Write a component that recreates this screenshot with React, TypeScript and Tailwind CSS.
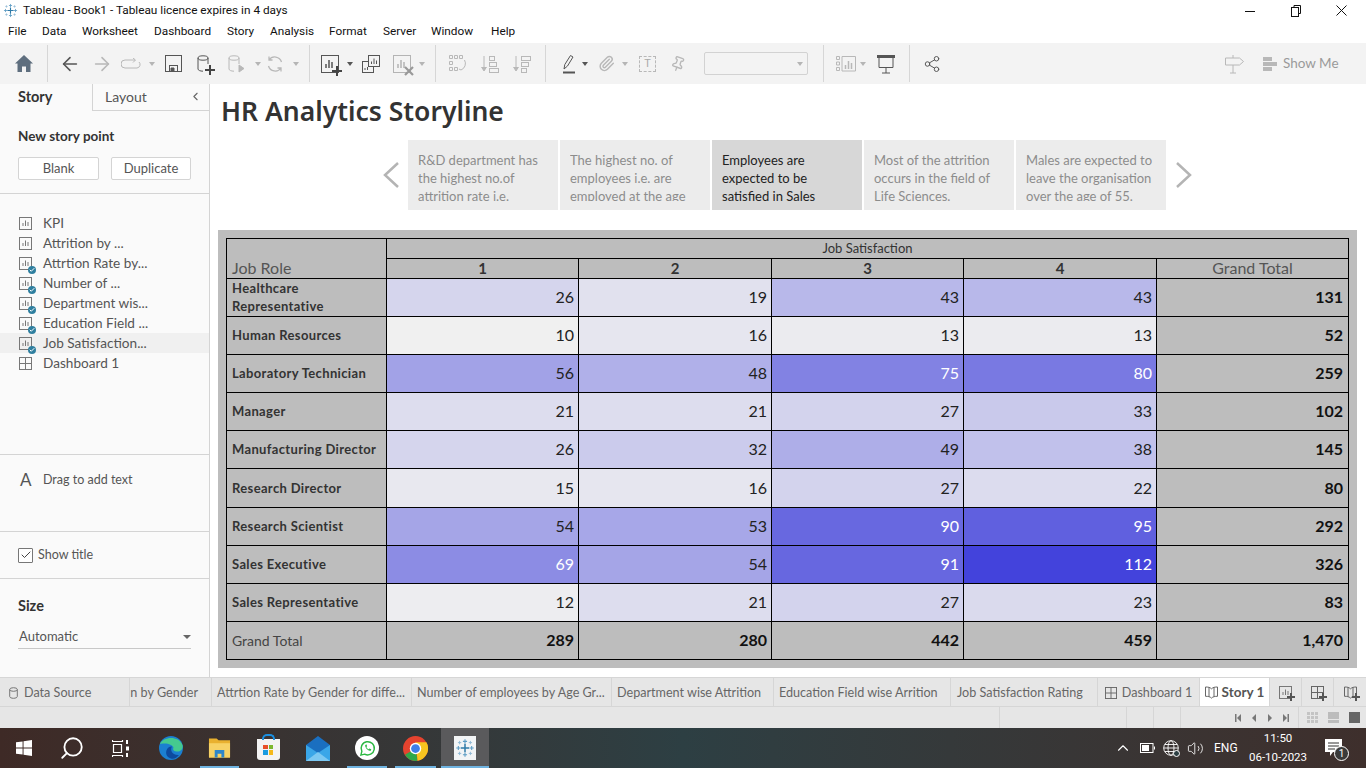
import React from 'react';
import { ArrowLeft, ArrowRight, Share2, Paperclip, Pin, Search, ChevronUp, Volume2, Check, ChevronLeft } from 'lucide-react';

const ui = "font-['Roboto',sans-serif]";
const tb = "font-['Lato',sans-serif]";

const menuItems = [
  ['File', 'w-[34px]'], ['Data', 'w-[40px]'], ['Worksheet', 'w-[72px]'], ['Dashboard', 'w-[73px]'], ['Story', 'w-[43px]'], ['Analysis', 'w-[59px]'],
  ['Format', 'w-[54px]'], ['Server', 'w-[48px]'], ['Window', 'w-[60px]'], ['Help', 'w-[40px]'],
];

const rows: [string, number, number, number, number, string][] = [
  ['Healthcare Representative', 26, 19, 43, 43, '131'],
  ['Human Resources', 10, 16, 13, 13, '52'],
  ['Laboratory Technician', 56, 48, 75, 80, '259'],
  ['Manager', 21, 21, 27, 33, '102'],
  ['Manufacturing Director', 26, 32, 49, 38, '145'],
  ['Research Director', 15, 16, 27, 22, '80'],
  ['Research Scientist', 54, 53, 90, 95, '292'],
  ['Sales Executive', 69, 54, 91, 112, '326'],
  ['Sales Representative', 12, 21, 27, 23, '83'],
];

const sheets = ['KPI', 'Attrition by ...', 'Attrtion Rate by...', 'Number of ...', 'Department wis...', 'Education Field ...', 'Job Satisfaction...'];

const storyPoints = [
  ['R&D department has', 'the highest no.of', 'attrition rate i.e.'],
  ['The highest no. of', 'employees i.e. are', 'employed at the age'],
  ['Employees are', 'expected to be', 'satisfied in Sales'],
  ['Most of the attrition', 'occurs in the field of', 'Life Sciences.'],
  ['Males are expected to', 'leave the organisation', 'over the age of 55.'],
];

const tabs = [
  ['n by Gender', 'w-[82px] justify-end pr-[13px]'],
  ['Attrtion Rate by Gender for diffe...', 'w-[200px] pl-[5px]'],
  ['Number of employees by Age Gr...', 'w-[200px] pl-[5px]'],
  ['Department wise Attrition', 'w-[162px] pl-[5px]'],
  ['Education Field wise Arrition', 'w-[177px] pl-[5px]'],
  ['Job Satisfaction Rating', 'w-[147px] pl-[6px]'],
];

function cellColor(v: number) {
  const t = (v - 10) / 102;
  const rg = Math.round(240 - t * 173);
  const b = Math.round(240 - t * 20);
  return `rgb(${rg},${rg},${b})`;
}

function Caret({ light = false }: { light?: boolean }) {
  return <span className={`block h-0 w-0 border-x-[3px] border-t-[4px] border-x-transparent ${light ? 'border-t-[#b5b5b5]' : 'border-t-[#555]'}`} />;
}

function Sep({ className = '' }: { className?: string }) {
  return <div className={`h-[37px] w-px bg-[#d6d6d6] ${className}`} />;
}

function ChartIcon({ dim = false, size = 18 }: { dim?: boolean; size?: number }) {
  const c = dim ? '#b4b4b4' : '#555';
  return (
    <svg width={size} height={size} viewBox="0 0 18 18" fill="none" stroke={c}>
      <rect x="0.5" y="0.5" width="17" height="17" />
      <path d="M5 13V9M8 13V5M11 13V7" strokeWidth="1.5" />
    </svg>
  );
}

function Plus({ className = '' }: { className?: string }) {
  return (
    <svg className={className} width="10" height="10" viewBox="0 0 10 10">
      <path d="M4 0h2v4h4v2H6v4H4V6H0V4h4z" fill="#444" />
    </svg>
  );
}

function SheetIcon({ checked }: { checked: boolean }) {
  return (
    <div className="relative h-[13px] w-[13px]">
      <svg width="13" height="13" viewBox="0 0 13 13" fill="none" stroke="#777">
        <rect x="0.5" y="0.5" width="12" height="12" />
        <path d="M4 9V6M6.5 9V3.5M9 9V5" />
      </svg>
      {checked && (
        <span className="absolute -right-[4px] -bottom-[4px] flex h-[8px] w-[8px] items-center justify-center rounded-full bg-[#2f7f9f]">
          <Check size={6} color="#fff" strokeWidth={4} />
        </span>
      )}
    </div>
  );
}

function GridIcon({ color = '#777', size = 13 }: { color?: string; size?: number }) {
  return (
    <svg width={size} height={size} viewBox="0 0 13 13" fill="none" stroke={color}>
      <rect x="0.5" y="0.5" width="12" height="12" />
      <path d="M6.5 0.5V12.5M0.5 6.5H12.5" />
    </svg>
  );
}

function BookIcon({ color = '#666' }: { color?: string }) {
  return (
    <svg width="13" height="13" viewBox="0 0 13 13" fill="none" stroke={color}>
      <path d="M.5 1c2.500 0 4.500.3 6 1.800C8 1.300 10 1 12.500 1v9.300c-2.500 0-4.500.3-6 1.800-1.500-1.500-3.500-1.800-6-1.800zM4 1.300v9.400M9 1.300v9.400" />
    </svg>
  );
}

function TableauMark({ size = 16 }: { size?: number }) {
  return (
    <svg width={size} height={size} viewBox="0 0 24 24" fill="none" strokeLinecap="butt">
      <path d="M12 7v10M7 12h10" stroke="#2f7aa8" strokeWidth="1.8" />
      <path d="M12 1.500v5M9.500 4h5M12 17.500v5M9.500 20h5M1.500 12h5M4 9.500v5M17.500 12h5M20 9.500v5" stroke="#5b9bc4" strokeWidth="1.300" />
      <path d="M5.500 3.500v4M3.500 5.500h4M18.500 3.500v4M16.500 5.500h4M5.500 16.500v4M3.500 18.500h4M18.500 16.500v4M16.500 18.500h4" stroke="#8db8d4" strokeWidth="1.100" />
    </svg>
  );
}

function Toolbar() {
  return (
    <div className="flex h-[41px] items-center bg-[#f3f3f3] pl-[8px]">
      <div className="flex w-[32px] justify-center">
        <svg width="18" height="17" viewBox="0 0 18 17" fill="#5e6e7e"><path d="M9 0L0 8.500h2.500V17h4.500v-5.500h4V17h4.500V8.500H18z" /></svg>
      </div>
      <Sep className="ml-[7px]" />
      <div className="ml-[6px] flex w-[32px] justify-center"><ArrowLeft size={22} color="#555" strokeWidth={1.700} /></div>
      <div className="flex w-[32px] justify-center"><ArrowRight size={22} color="#b8b8b8" strokeWidth={1.700} /></div>
      <div className="flex w-[26px] justify-center">
        <svg width="20" height="12" viewBox="0 0 20 12" fill="none" stroke="#b8b8b8"><path d="M14 2H4a3.500 3.500 0 0 0 0 8h12a3.500 3.500 0 0 0 2-6M12 0l2.500 2L12 4.500" /></svg>
      </div>
      <div className="flex w-[14px] justify-center pl-[2px]"><Caret light /></div>
      <div className="flex w-[30px] justify-center">
        <svg width="17" height="17" viewBox="0 0 17 17" fill="none" stroke="#555"><rect x="0.500" y="0.500" width="16" height="16" /><rect x="4.500" y="10.500" width="8" height="6" /><path d="M6 13h3v3H6z" fill="#555" /></svg>
      </div>
      <div className="relative flex w-[32px] justify-center">
        <svg width="15" height="18" viewBox="0 0 15 18" fill="none" stroke="#555"><ellipse cx="6" cy="3" rx="5" ry="2.200" /><path d="M1 3v11c0 1.200 2.200 2.200 5 2.200M11 3v6" /></svg>
        <Plus className="absolute right-[5px] -bottom-[2px]" />
      </div>
      <div className="flex w-[32px] justify-center">
        <svg width="17" height="18" viewBox="0 0 17 18" fill="none" stroke="#b8b8b8"><ellipse cx="6" cy="3" rx="5" ry="2.200" /><path d="M1 3v11c0 1.200 2.200 2.200 5 2.200M11 3v6" /><path d="M11 10l5 3.500-5 3.500z" fill="#b8b8b8" /></svg>
      </div>
      <div className="flex w-[8px] justify-center pl-[3px]"><Caret light /></div>
      <div className="ml-[1px] flex w-[28px] justify-center">
        <svg width="18" height="18" viewBox="0 0 18 18" fill="none" stroke="#b8b8b8" strokeWidth="1.300"><path d="M15.500 7A7 7 0 0 0 3 5M2.500 11A7 7 0 0 0 15 13M3 1.500V5h3.500M15 16.500V13h-3.500" /></svg>
      </div>
      <div className="flex w-[14px] justify-center"><Caret light /></div>
      <Sep className="ml-[6px]" />
      <div className="relative ml-[11px] flex w-[18px] justify-center">
        <ChartIcon />
        <Plus className="absolute -right-[3px] -bottom-[3px]" />
      </div>
      <div className="ml-[7px] flex w-[8px] justify-center"><Caret /></div>
      <div className="ml-[8px] flex w-[18px] justify-center">
        <svg width="18" height="18" viewBox="0 0 18 18" fill="none" stroke="#555"><rect x="0.500" y="6.500" width="11" height="11" /><rect x="6.500" y="0.500" width="11" height="11" fill="#f3f3f3" /><path d="M9.500 9V6.500M12 9V3.500M14.500 9V5.500M3 15v-2M5.500 15v-3" /></svg>
      </div>
      <div className="relative ml-[13px] flex w-[18px] justify-center">
        <ChartIcon dim />
        <svg className="absolute -right-[3px] -bottom-[3px]" width="10" height="10" viewBox="0 0 10 10" fill="none" stroke="#999" strokeWidth="2.200"><path d="M1 1l8 8M9 1l-8 8" /></svg>
      </div>
      <div className="ml-[7px] flex w-[8px] justify-center"><Caret light /></div>
      <Sep className="ml-[9px]" />
      <div className="ml-[13px] flex w-[18px] justify-center">
        <svg width="18" height="18" viewBox="0 0 18 18" fill="none" stroke="#b8b8b8"><path d="M.5.5h3v3h-3zM5.500.5h3v3h-3zM10.500.5h3v3h-3zM.5 6.500h3v3h-3zM.5 12.500h3v3h-3zM5.500 12.500h3v3h-3zM15.500 5a7 7 0 0 1-3.500 10l-2-1" /></svg>
      </div>
      <div className="ml-[14px] flex w-[18px] justify-center">
        <svg width="18" height="18" viewBox="0 0 18 18" fill="none" stroke="#b8b8b8"><path d="M3 1v13M.500 12L3 16l2.500-4" fill="#b8b8b8" /><rect x="8.500" y="1.500" width="5" height="4" /><rect x="8.500" y="7.500" width="7" height="4" /><rect x="8.500" y="13.500" width="9" height="4" /></svg>
      </div>
      <div className="ml-[14px] flex w-[18px] justify-center">
        <svg width="18" height="18" viewBox="0 0 18 18" fill="none" stroke="#b8b8b8"><path d="M3 1v13M.500 12L3 16l2.500-4" fill="#b8b8b8" /><rect x="8.500" y="1.500" width="9" height="4" /><rect x="8.500" y="7.500" width="7" height="4" /><rect x="8.500" y="13.500" width="5" height="4" /></svg>
      </div>
      <Sep className="ml-[14px]" />
      <div className="ml-[16px] flex w-[14px] justify-center">
        <svg width="14" height="20" viewBox="0 0 14 20" fill="none"><path d="M2 15l.8-4.500L8.500 1.500l2.500 1.500L5.500 12z" stroke="#555" /><path d="M1 18.500h12" stroke="#555" strokeWidth="2" /></svg>
      </div>
      <div className="ml-[5px] flex w-[8px] justify-center"><Caret /></div>
      <div className="ml-[10px] flex w-[14px] justify-center"><Paperclip size={17} color="#b8b8b8" className="shrink-0" /></div>
      <div className="ml-[8px] flex w-[8px] justify-center"><Caret light /></div>
      <div className="ml-[10px] flex w-[17px] justify-center">
        <div className={`flex h-[16px] w-[17px] items-center justify-center border border-dashed border-[#b8b8b8] text-[11px] leading-none text-[#aaa] ${ui}`}>T</div>
      </div>
      <div className="ml-[15px] flex w-[14px] justify-center"><Pin size={16} color="#b8b8b8" className="shrink-0 rotate-[20deg]" /></div>
      <div className="ml-[19px] flex h-[23px] w-[104px] items-center justify-end rounded-[2px] border border-[#d2d2d2] pr-[4px]"><Caret light /></div>
      <Sep className="ml-[15px]" />
      <div className="ml-[12px] flex w-[20px] justify-center">
        <svg width="20" height="16" viewBox="0 0 20 16" fill="none" stroke="#b8b8b8"><path d="M.5.5h3v3h-3zM.5 6h3v3h-3zM.5 11.500h3v3h-3zM6 .5h13.500v14.500H6z" /><path d="M9.500 13V9M12.500 13V5M15.500 13V7" strokeWidth="1.500" /></svg>
      </div>
      <div className="ml-[3px] flex w-[8px] justify-center"><Caret light /></div>
      <div className="ml-[10px] flex w-[18px] justify-center">
        <svg width="18" height="20" viewBox="0 0 18 20" fill="none" stroke="#555"><path d="M0 1h18v3H0z" fill="#555" stroke="none" /><path d="M2 4v9.500h14V4M9 13.500V19M5 19h8" /></svg>
      </div>
      <Sep className="ml-[14px]" />
      <div className="ml-[15px] flex w-[14px] justify-center"><Share2 size={18} color="#555" strokeWidth={1.300} className="shrink-0" /></div>
      <div className="ml-auto flex items-center pr-[29px]">
        <svg width="19" height="20" viewBox="0 0 19 20" fill="none" stroke="#b8b8b8"><path d="M.5 4h14l4 3.500-4 3.500H.5zM8 1v3M8 11v8M5 19h6" /></svg>
        <div className="ml-[19px] flex w-[14px] flex-col gap-[1px]">
          <span className="h-[4px] w-[9px] bg-[#b8b8b8]" />
          <span className="h-[4px] w-[14px] bg-[#b8b8b8]" />
          <span className="h-[4px] w-[9px] bg-[#b8b8b8]" />
        </div>
        <span className={`ml-[6px] w-[54px] whitespace-nowrap text-[13.500px] text-[#9a9a9a] ${tb}`}>Show Me</span>
      </div>
    </div>
  );
}

function Sidebar() {
  return (
    <aside className={`flex w-[210px] shrink-0 flex-col border-r border-[#d4d4d4] bg-[#fafafa] text-[#555] ${tb}`}>
      <div className="flex h-[27px] text-[14px]">
        <div className="flex w-[92px] items-center pb-[2px] pl-[18px] text-[14.500px] font-bold text-[#333]">Story</div>
        <div className="flex flex-1 items-center justify-between border-b border-l border-[#d4d4d4] pr-[7px] pb-[1px] pl-[12px]">
          Layout
          <ChevronLeft size={13} color="#666" />
        </div>
      </div>
      <div className="flex h-[83px] flex-col border-b border-[#d4d4d4] px-[18px] pt-[16px]">
        <div className="text-[13.500px] leading-[18px] font-bold text-[#333]">New story point</div>
        <div className="mt-[12px] flex justify-between text-[13px]">
          <div className="flex h-[23px] w-[81px] items-center justify-center rounded-[2px] border border-[#d4d4d4] bg-white">Blank</div>
          <div className="flex h-[23px] w-[80px] items-center justify-center rounded-[2px] border border-[#d4d4d4] bg-white">Duplicate</div>
        </div>
      </div>
      <div className="flex h-[261px] flex-col border-b border-[#d4d4d4] pt-[19px] text-[13.600px]">
        {sheets.map((s, i) => (
          <div key={s} className={`flex h-[20px] items-center gap-[11px] pl-[19px] ${i === 6 ? 'bg-[#f0f0f0]' : ''}`}>
            <SheetIcon checked={i > 1} />
            {s}
          </div>
        ))}
        <div className="flex h-[20px] items-center gap-[11px] pl-[19px]">
          <GridIcon />
          Dashboard 1
        </div>
      </div>
      <div className="flex h-[77px] items-start border-b border-[#d4d4d4] pt-[15px] pl-[20px] text-[12.500px]">
        <span className="w-[23px] text-[17px] leading-[20px]">A</span>
        <span className="leading-[20px]">Drag to add text</span>
      </div>
      <div className="flex h-[47px] items-center gap-[5px] border-b border-[#d4d4d4] pl-[18px] text-[12.500px]">
        <span className="flex h-[15px] w-[15px] items-center justify-center rounded-[1px] border border-[#777] bg-white"><Check size={12} color="#444" strokeWidth={2} /></span>
        Show title
      </div>
      <div className="px-[18px] pt-[18px]">
        <div className="text-[14.500px] leading-[18px] font-bold text-[#333]">Size</div>
        <div className="mt-[11px] flex h-[23px] items-center justify-between border-b border-[#c8c8c8] pr-[0px] pl-[1px] text-[13px]">
          Automatic
          <span className="block h-0 w-0 border-x-[4px] border-t-[4px] border-x-transparent border-t-[#666]" />
        </div>
      </div>
    </aside>
  );
}

function StoryNav() {
  return (
    <div className="flex justify-center gap-[2px] pr-[2px]">
      <div className="flex w-[36px] items-center justify-end">
        <svg width="16" height="26" viewBox="0 0 16 26" fill="none" stroke="#b4b4b4" strokeWidth="2.500" className="mr-[7px]"><path d="M15 1L2 13l13 12" /></svg>
      </div>
      {storyPoints.map((lines, i) => (
        <div key={i} className={`h-[70px] w-[150px] pt-[11px] pl-[10px] text-[13px] leading-[18px] ${i === 2 ? 'bg-[#d7d7d7] text-[#222]' : 'bg-[#ececec] text-[#8c8c8c]'}`}>
          <div className="h-[50px] overflow-hidden">
            {lines.map((l) => <div key={l} className="whitespace-nowrap">{l}</div>)}
          </div>
        </div>
      ))}
      <div className="flex w-[36px] items-center">
        <svg width="16" height="26" viewBox="0 0 16 26" fill="none" stroke="#b4b4b4" strokeWidth="2.500" className="ml-[8px]"><path d="M1 1l13 12L1 25" /></svg>
      </div>
    </div>
  );
}

function CrossTab() {
  return (
    <div className="mt-[20px] mr-[9px] ml-[8px] bg-[#bdbdbd] p-[8px]">
      <div className="grid grid-cols-[160px_192px_193px_192px_193px_1fr] grid-rows-[20px_20px_repeat(10,38.1px)] border-t border-l border-black text-[#333]">
        <div className="row-span-2 flex items-end border-r border-b border-black pl-[5px] text-[16px] leading-[21px] text-[#555]">Job Role</div>
        <div className="col-span-5 flex items-center justify-center border-r border-b border-black text-[13px]">Job Satisfaction</div>
        {['1', '2', '3', '4'].map((h) => (
          <div key={h} className="flex items-center justify-center border-r border-b border-black pb-[1px] text-[15px] font-bold">{h}</div>
        ))}
        <div className="flex items-center justify-center border-r border-b border-black pb-[2px] text-[16px] text-[#555]">Grand Total</div>
        {rows.map(([role, a, b, c, d, total]) => (
          <React.Fragment key={role}>
            <div className="flex items-center border-r border-b border-black pr-[4px] pb-[1px] pl-[5px] text-[13px] leading-[18px] font-bold tracking-[0.35px]">{role}</div>
            {[a, b, c, d].map((v, i) => (
              <div key={i} className={`flex items-center justify-end border-r border-b border-black pr-[4px] pb-[1px] text-[16px] ${v > 60 ? 'text-white' : 'text-[#222]'}`} style={{ backgroundColor: cellColor(v) }}>{v}</div>
            ))}
            <div className="flex items-center justify-end border-r border-b border-black pr-[5px] pb-[1px] text-[16px] font-bold text-[#111]">{total}</div>
          </React.Fragment>
        ))}
        <div className="flex items-center border-r border-b border-black pl-[5px] text-[14px] text-[#444]">Grand Total</div>
        {['289', '280', '442', '459', '1,470'].map((t, i) => (
          <div key={t} className={`flex items-center justify-end border-r border-b border-black text-[16px] font-bold text-[#111] ${i === 4 ? 'pr-[5px]' : 'pr-[4px]'}`}>{t}</div>
        ))}
      </div>
    </div>
  );
}

function TabBar() {
  return (
    <div className={`flex h-[30px] border-y border-[#d6d6d6] bg-[#e6e6e6] text-[12.600px] whitespace-nowrap text-[#666] ${tb}`}>
      <div className="flex w-[130px] items-center gap-[6px] border-r border-[#d6d6d6] pt-[2px] pl-[9px]">
        <svg width="9" height="12" viewBox="0 0 9 12" fill="none" stroke="#777"><ellipse cx="4.500" cy="2.500" rx="3.800" ry="1.800" /><path d="M.7 2.500v7c0 1 1.700 1.800 3.800 1.800s3.800-.8 3.800-1.800v-7" /></svg>
        Data Source
      </div>
      {tabs.map(([t, c]) => (
        <div key={t} className={`flex items-center border-r border-[#d6d6d6] pt-[2px] ${c}`}>{t}</div>
      ))}
      <div className="flex w-[102px] items-center justify-center gap-[5px] border-r border-[#d6d6d6] pt-[2px]"><GridIcon color="#666" size={12} />Dashboard 1</div>
      <div className="flex w-[70px] items-center justify-center gap-[4px] border-r border-[#d6d6d6] bg-white pt-[1px] text-[13.500px] font-bold text-[#555]"><BookIcon />Story 1</div>
      {[0, 1, 2].map((i) => (
        <div key={i} className={`relative flex items-center justify-center ${i === 2 ? 'flex-1' : 'w-[32px] border-r border-[#d6d6d6]'}`}>
          {i === 0 ? <SheetIcon checked={false} /> : i === 1 ? <GridIcon color="#666" /> : <BookIcon />}
          <svg className="absolute right-[6px] bottom-[5px]" width="8" height="8" viewBox="0 0 8 8"><path d="M3 0h2v3h3v2H5v3H3V5H0V3h3z" fill="#555" /></svg>
        </div>
      ))}
    </div>
  );
}

function StatusBar() {
  return (
    <div className="flex h-[21px] bg-[#e6e6e6]">
      <div className="w-[1000px] border-r border-[#d6d6d6]" />
      <div className="w-[127px] border-r border-[#d6d6d6]" />
      <div className="w-[27px] border-r border-[#d6d6d6]" />
      <div className="w-[27px] border-r border-[#d6d6d6]" />
      <div className="flex w-[118px] items-center justify-end border-r border-[#d6d6d6] pr-[9px]">
        <svg width="6" height="8" viewBox="0 0 6 8" fill="#777"><path d="M0 0h1.500v8H0zM6 0v8L2 4z" /></svg>
        <svg className="ml-[11px]" width="4" height="8" viewBox="0 0 4 8" fill="#777"><path d="M4 0v8L0 4z" /></svg>
        <svg className="ml-[12px]" width="4" height="8" viewBox="0 0 4 8" fill="#777"><path d="M0 0v8l4-4z" /></svg>
        <svg className="ml-[11px]" width="6" height="8" viewBox="0 0 6 8" fill="#777"><path d="M4.500 0H6v8H4.500zM0 0v8l4-4z" /></svg>
      </div>
      <div className="flex flex-1 items-center pl-[8px]">
        <div className="grid h-[11px] w-[11px] grid-cols-3 gap-[1px]">
          {[...Array(9)].map((_, i) => <span key={i} className="bg-[#c4c4c4]" />)}
        </div>
        <div className="ml-[10px] flex h-[11px] w-[11px] flex-col gap-[1px]">
          <span className="h-[7px] bg-[#bcbcbc]" />
          <span className="h-[3px] bg-[#bcbcbc]" />
        </div>
        <span className="ml-[10px] h-[11px] w-[11px] bg-[#666]" />
      </div>
    </div>
  );
}

function Underline({ className = 'inset-x-[4px]' }: { className?: string }) {
  return <span className={`absolute bottom-0 h-[2px] bg-[#6fb3e0] ${className}`} />;
}

function Taskbar() {
  return (
    <div className={`flex h-[40px] items-center bg-gradient-to-r from-[#3e2a26] via-[#2d3f43] via-50% to-[#3e2f2c] text-white ${ui}`}>
      <div className="flex w-[48px] justify-center">
        <svg width="16" height="16" viewBox="0 0 17 17" fill="#fff"><path d="M0 2.500l7-1V8H0zM8 1.300l9-1.300V8H8zM0 9h7v6.500l-7-1zM8 9h9v8l-9-1.300z" /></svg>
      </div>
      <div className="flex w-[48px] justify-center"><Search size={26} strokeWidth={1.700} className="-scale-x-100" /></div>
      <div className="flex w-[48px] justify-center">
        <svg width="17" height="17" viewBox="0 0 17 17" fill="none" stroke="#fff"><path d="M.5 0v1.500h10V0M.5 17v-1.500h10V17M1.500 4.500h8v8h-8z" strokeWidth="1.200" /><path d="M14 0h2v4h-2zM14 6.500h3v4h-3zM14 13h2v4h-2z" fill="#fff" stroke="none" /></svg>
      </div>
      <div className="ml-[3px] flex w-[48px] justify-center">
        <svg width="24" height="24" viewBox="0 0 24 24"><circle cx="12" cy="12" r="12" fill="#1b7fd0" /><path d="M1 8C4 1 19-1 23.500 9c1 4-2 7-6 6.500-3-.5-4-2-3-4-1-3-7-5-13.500-3.500z" fill="#45c98f" /><path d="M9 21c-4-4-1-11 4-10.500-2 3-.5 9 7 8.500-3 4-7 5-11 2z" fill="#0d4a9e" /></svg>
      </div>
      <div className="relative flex h-full w-[49px] items-center justify-center">
        <svg width="23" height="22" viewBox="0 0 24 22"><path d="M1 1h8l2 2h12v18H1z" fill="#e9b12f" /><path d="M1 6h22v15H1z" fill="#f7d265" /><path d="M7 13h10v8h-3v-4h-4v4H7z" fill="#2e86c9" /></svg>
        <Underline className="inset-x-[5px]" />
      </div>
      <div className="flex w-[48px] justify-center">
        <div className="relative mt-[3px] flex h-[21px] w-[23px] items-center justify-center rounded-b-[3px] bg-[#f3f3f3]">
          <span className="absolute -top-[5px] left-[5px] h-[6px] w-[13px] rounded-t-[5px] border-2 border-b-0 border-[#1b8fe0]" />
          <div className="grid h-[10px] w-[10px] grid-cols-2 gap-[1px]">
            <span className="bg-[#e8502a]" /><span className="bg-[#7cb82f]" /><span className="bg-[#1a9be0]" /><span className="bg-[#f5b91a]" />
          </div>
        </div>
      </div>
      <div className="ml-[1px] flex w-[50px] justify-center">
        <svg width="24" height="25" viewBox="0 0 24 25"><path d="M0 9L12 0l12 9v16H0z" fill="#1a6fc0" /><path d="M0 9l12 8 12-8v16H0z" fill="#3aa6e8" /><path d="M0 25l12-9 12 9z" fill="#7cc8f2" /></svg>
      </div>
      <div className="relative flex h-full w-[48px] items-center justify-center">
        <span className="flex h-[24px] w-[24px] items-center justify-center rounded-full bg-white">
          <svg width="17" height="17" viewBox="0 0 18 18" fill="none"><path d="M2 16l1-4a7 7 0 1 1 3 3z" stroke="#2cb742" strokeWidth="1.500" /><path d="M6.500 5.500c0 3 3 6 6 6l.5-1.800-2-.8-.8.8c-1-.4-2-1.400-2.400-2.400l.8-.8-.8-2z" fill="#2cb742" /></svg>
        </span>
        <Underline />
      </div>
      <div className="relative flex h-full w-[49px] items-center justify-center">
        <svg width="25" height="25" viewBox="0 0 24 24"><circle cx="12" cy="12" r="12" fill="#e5432f" /><path d="M12 12L2 18a12 12 0 0 0 12 5.800z" fill="#2ea84a" /><path d="M12 6h10.500A12 12 0 0 1 14 23.800z" fill="#f7c41f" /><circle cx="12" cy="12" r="5.500" fill="#fff" /><circle cx="12" cy="12" r="4.200" fill="#3f7fe8" /></svg>
        <Underline />
      </div>
      <div className="relative ml-[1px] flex h-full w-[48px] items-center justify-center bg-[#5a5a5c]">
        <span className="flex h-[24px] w-[22px] items-center justify-center bg-[#f2f4f6]"><TableauMark size={20} /></span>
        <Underline className="inset-x-0" />
      </div>
      <div className="ml-auto flex h-full items-center">
        <ChevronUp size={18} strokeWidth={1.500} />
        <svg className="ml-[8px]" width="15" height="10" viewBox="0 0 15 10" fill="none" stroke="#fff"><rect x=".5" y=".5" width="12.500" height="9" /><rect x="2.500" y="2.500" width="6" height="5" fill="#fff" /><path d="M14.500 3.500v3" /></svg>
        <div className="relative ml-[8px] h-[16px] w-[16px]">
          <svg width="16" height="16" viewBox="0 0 16 16" fill="none" stroke="#fff" strokeWidth="0.900"><circle cx="8" cy="8" r="7.300" /><ellipse cx="8" cy="8" rx="3" ry="7.300" /><path d="M.7 8h14.600M2 4.500h12M2 11.500h12" /></svg>
          <span className="absolute -right-[1px] -bottom-[1px] h-[7px] w-[7px] rounded-full border border-white bg-[#2d3f43]" />
        </div>
        <Volume2 size={17} strokeWidth={1.200} className="ml-[8px]" />
        <span className="ml-[10px] w-[23px] text-[12px] whitespace-nowrap">ENG</span>
        <div className="ml-[12px] flex w-[58px] flex-col items-center text-[11.500px] leading-[19px] whitespace-nowrap">
          <span>11:50</span>
          <span>06-10-2023</span>
        </div>
        <div className="relative mr-[24px] ml-[18px] h-[18px] w-[17px]">
          <svg width="17" height="18" viewBox="0 0 17 18"><path d="M0 0h17v13H8l-3 4v-4H0z" fill="#fff" /><path d="M3 4h11M3 7h11M3 10h7" stroke="#333" /></svg>
          <span className="absolute -right-[7px] -bottom-[4px] flex h-[15px] w-[15px] items-center justify-center rounded-full border border-white bg-[#3a3a3a] text-[10px] leading-none">1</span>
        </div>
      </div>
    </div>
  );
}

export default function App() {
  return (
    <div className="flex h-[768px] w-[1366px] flex-col overflow-hidden bg-white">
      <div className={`flex h-[21px] items-center pl-[3px] text-[11.800px] text-[#111] ${ui}`}>
        <TableauMark size={15} />
        <span className="ml-[5px]">Tableau - Book1 - Tableau licence expires in 4 days</span>
        <div className="ml-auto flex items-center">
          <svg width="10" height="10" viewBox="0 0 10 10" stroke="#111"><path d="M0 5.500h10" /></svg>
          <svg className="ml-[36px]" width="10" height="12" viewBox="0 0 10 12" fill="none" stroke="#111"><path d="M3 2.500V.5h6.500v8H7.500" /><rect x="0.500" y="2.500" width="7" height="9" /></svg>
          <svg className="mr-[19px] ml-[35px]" width="11" height="11" viewBox="0 0 11 11" fill="none" stroke="#111"><path d="M.5.5l10 10M10.500.5l-10 10" /></svg>
        </div>
      </div>
      <div className={`flex h-[22px] items-center pl-[8px] text-[11.800px] text-[#111] ${ui}`}>
        {menuItems.map(([m, w]) => <div key={m} className={w}>{m}</div>)}
      </div>
      <Toolbar />
      <div className="flex h-[593px]">
        <Sidebar />
        <main className="flex-1 font-['Lato',sans-serif]">
          <h1 className="pt-[10px] pl-[11px] font-['Noto_Sans',sans-serif] text-[26.500px] leading-[35px] font-semibold text-[#333]">HR Analytics Storyline</h1>
          <div className="mt-[11px]"><StoryNav /></div>
          <CrossTab />
        </main>
      </div>
      <TabBar />
      <StatusBar />
      <Taskbar />
    </div>
  );
}
